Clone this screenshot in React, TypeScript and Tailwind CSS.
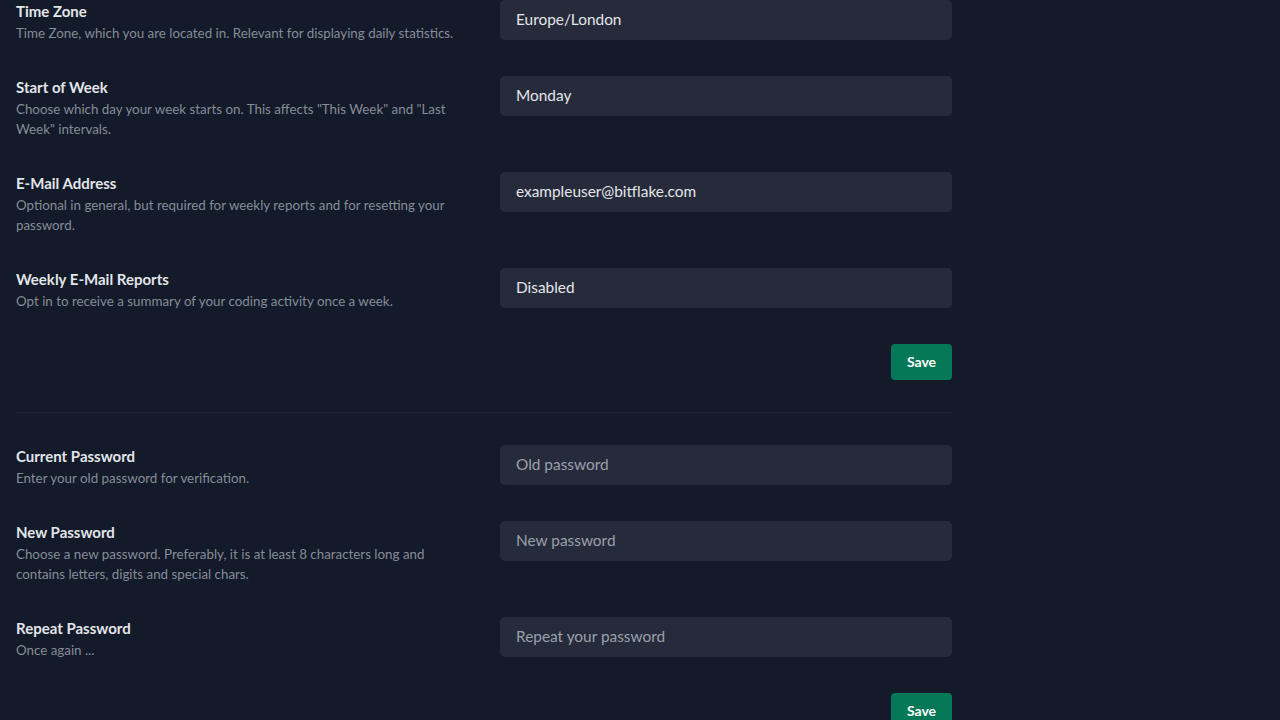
import React from "react";

type Row = { title: string; desc: string; value?: string; placeholder?: string };

const rows1: Row[] = [
  { title: "Time Zone", desc: "Time Zone, which you are located in. Relevant for displaying daily statistics.", value: "Europe/London" },
  { title: "Start of Week", desc: 'Choose which day your week starts on. This affects "This Week" and "Last Week" intervals.', value: "Monday" },
  { title: "E-Mail Address", desc: "Optional in general, but required for weekly reports and for resetting your password.", value: "exampleuser@bitflake.com" },
  { title: "Weekly E-Mail Reports", desc: "Opt in to receive a summary of your coding activity once a week.", value: "Disabled" },
];

const rows2: Row[] = [
  { title: "Current Password", desc: "Enter your old password for verification.", placeholder: "Old password" },
  { title: "New Password", desc: "Choose a new password. Preferably, it is at least 8 characters long and contains letters, digits and special chars.", placeholder: "New password" },
  { title: "Repeat Password", desc: "Once again ...", placeholder: "Repeat your password" },
];

function FormRow({ r }: { r: Row }) {
  return (
    <div className="flex">
      <div className="w-[484px] shrink-0">
        <div className="mb-[-2px] w-[450px]">
          <div className="text-[15px] font-bold leading-[22px] text-[#e2e5ea]">{r.title}</div>
          <div className="relative top-px text-[13.35px] leading-[20px] text-[#868c98]">{r.desc}</div>
        </div>
      </div>
      <div className="flex-1">
        <div className="flex h-10 items-center rounded-[5px] bg-[#262b3b] px-4 text-[15.4px]">
          {r.value ? (
            <span className="text-[#e2e5ea]">{r.value}</span>
          ) : (
            <span className="text-[#9aa0ab]">{r.placeholder}</span>
          )}
        </div>
      </div>
    </div>
  );
}

export default function App() {
  return (
    <div
      className="h-[720px] w-full overflow-hidden bg-[#131a29]"
      style={{ fontFamily: "Lato, 'Noto Sans', sans-serif" }}
    >
      <div className="ml-4 flex w-[936px] flex-col">
        <div className="flex flex-col gap-9">
          {rows1.map((r) => (
            <FormRow key={r.title} r={r} />
          ))}
          <div className="flex justify-end">
            <button className="h-9 w-[61px] rounded-[4px] bg-[#047857] pb-[2px] text-[14px] font-bold text-white">Save</button>
          </div>
        </div>
        <div className="mt-8 mb-8 h-px bg-[#1f2736]" />
        <div className="flex flex-col gap-9">
          {rows2.map((r) => (
            <FormRow key={r.title} r={r} />
          ))}
          <div className="flex justify-end">
            <button className="h-9 w-[61px] rounded-[4px] bg-[#047857] pb-[2px] text-[14px] font-bold text-white">Save</button>
          </div>
        </div>
      </div>
    </div>
  );
}
